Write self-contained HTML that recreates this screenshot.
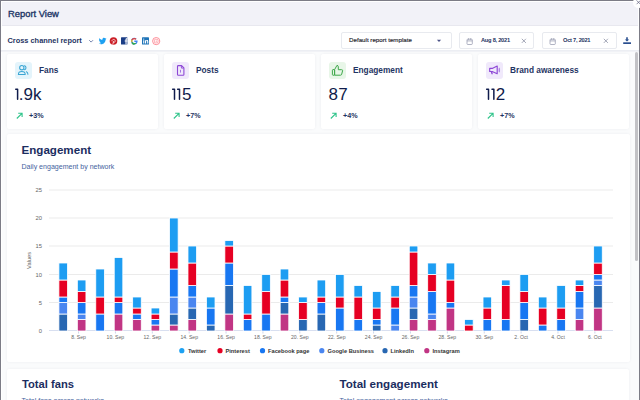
<!DOCTYPE html>
<html><head><meta charset="utf-8">
<style>
*{box-sizing:border-box;margin:0;padding:0}
html,body{width:640px;height:400px;overflow:hidden}
body{font-family:"Liberation Sans",sans-serif;background:#7c7c86;position:relative;color:#1b2d5b}
.modal{position:absolute;left:1px;top:1px;width:638px;height:420px;background:#fff;overflow:hidden}
.hdr{position:absolute;left:1px;top:1px;width:636px;height:24px;background:#f2f2f8;border-bottom:1px solid #e8e8ef;box-shadow:0 1px 0 #f3f3f7}
.t{position:absolute;white-space:nowrap;line-height:1}
.tb{position:absolute;left:0;top:25px;width:638px;height:25px;background:#fff;border-bottom:1px solid #eceef3;box-shadow:0 1px 0 #f1f2f6}
.card{position:absolute;background:#fff;border-radius:2px;box-shadow:0 0 3px rgba(30,40,90,0.06)}
.ib{position:absolute;width:17px;height:17px;border-radius:3px}
.lab{font-size:8.3px;font-weight:bold;color:#1f3563}
.val{font-size:17px;color:#101c4c}
.pct{font-size:7.2px;font-weight:bold;color:#1f3563}
.sel{position:absolute;background:#fff;border:1px solid #e8eaef;border-radius:2px}
.yl{font-size:5.8px;fill:#666}
.xl{font-size:5.1px;fill:#666}
.lg{font-size:5.7px;font-weight:bold;fill:#333}
</style></head><body>
<div class="modal">
  <div class="hdr"></div><div style="position:absolute;left:1px;top:50px;width:637px;height:380px;background:#fafbfc"></div>
  <div class="t" style="left:7px;top:8.3px;font-size:9.4px;-webkit-text-stroke:0.35px #203566;color:#203566">Report View</div>
  <div class="tb"></div>
  <div class="t" style="left:6.5px;top:36.2px;font-size:7.4px;font-weight:bold;color:#1f3563">Cross channel report</div>
  <!-- chevron -->
  <svg class="t" style="left:87px;top:38px" width="8" height="5" viewBox="0 0 8 5"><path d="M1.2 1.2L3.1 3.1L5 1.2" fill="none" stroke="#5f70a0" stroke-width="0.85"/></svg>
  <!-- social icons -->
  <svg class="t" style="left:96px;top:34.6px" width="66" height="10" viewBox="0 0 66 10">
    <!-- twitter -->
    <path d="M9.3 2.6c-.3.1-.6.2-.9.2.3-.2.6-.5.7-.9-.3.2-.6.3-1 .4-.3-.3-.7-.5-1.1-.5-.9 0-1.6.7-1.6 1.6 0 .1 0 .2 0 .4C4.1 3.7 3 3.1 2.2 2.2c-.1.2-.2.5-.2.8 0 .6.3 1 .7 1.3-.3 0-.5-.1-.7-.2 0 .8.5 1.4 1.3 1.6-.1 0-.3.1-.4.1-.1 0-.2 0-.3 0 .2.6.8 1.1 1.5 1.1-.6.4-1.2.7-2 .7h-.4c.7.4 1.5.7 2.4.7 2.9 0 4.5-2.4 4.5-4.5v-.2c.3-.3.6-.6.7-.9z" fill="#1da1f2"/>
    <!-- pinterest -->
    <circle cx="16.5" cy="5" r="3.8" fill="#cb1f27"/>
    <path d="M15.8 8.5l.8-3.4M16.2 6.2c.3.4 1.9.4 2-1.1.1-1.3-1-1.8-1.9-1.6-1 .2-1.5 1.1-1.2 1.8" fill="none" stroke="#fff" stroke-width="0.7"/>
    <!-- facebook -->
    <rect x="24" y="1.3" width="6.4" height="7.2" rx="0.5" fill="#1b3e86"/>
    <path d="M29.6 8.5V5.6h1V4.5h-1v-.8c0-.3.1-.5.5-.5h.5v-1h-.8c-.9 0-1.3.5-1.3 1.3v1h-.8v1.1h.8v2.9" fill="#fff"/>
    
    <!-- google -->
    <path d="M40.6 4.6h-3.3v1.3h1.9c-.2.8-.9 1.3-1.9 1.3-1.1 0-2-.9-2-2.1s.9-2.1 2-2.1c.5 0 1 .2 1.3.5l1-.9c-.6-.5-1.4-.9-2.3-.9-1.9 0-3.4 1.5-3.4 3.4s1.5 3.4 3.4 3.4c1.9 0 3.3-1.3 3.3-3.3 0-.2 0-.4 0-.6z" fill="#4285f4"/>
    <path d="M34.5 3.4l1.1.9c.3-.6.9-1 1.6-1 .5 0 1 .2 1.3.5l1-.9c-.6-.5-1.4-.9-2.3-.9-1.3 0-2.5.8-3 1.9z" fill="#ea4335"/>
    <path d="M34.2 5c0 .5.1 1 .3 1.5l1.1-.9c-.1-.2-.1-.4-.1-.6s0-.4.1-.6l-1.1-.9c-.2.5-.3 1-.3 1.5z" fill="#fbbc05"/>
    <path d="M37.2 8.4c.9 0 1.7-.3 2.3-.8l-1.1-.9c-.3.2-.7.4-1.2.4-.7 0-1.3-.4-1.6-1l-1.1.9c.5 1.2 1.6 1.9 2.9 1.9z" fill="#34a853"/>
    <!-- linkedin -->
    <rect x="45" y="1.3" width="7" height="7.2" rx="0.6" fill="#1f74b8"/>
    <path d="M46.2 4.2h1.1v3.3h-1.1zM46.75 2.5a.6.6 0 1 1 0 1.2.6.6 0 1 1 0-1.2zM48 4.2h1v.5c.2-.3.5-.6 1.1-.6 1 0 1.2.7 1.2 1.5v1.9h-1.1V5.8c0-.4 0-.8-.5-.8s-.6.4-.6.8v1.7H48z" fill="#fff"/>
    <!-- instagram -->
    <circle cx="59.2" cy="5.1" r="3.6" fill="none" stroke="#fd7480" stroke-width="0.8"/>
    <rect x="57.4" y="3.3" width="3.6" height="3.6" rx="1" fill="none" stroke="#fd7480" stroke-width="0.6"/>
    <circle cx="59.2" cy="5.1" r="0.6" fill="#fd7480"/>
  </svg>

  <!-- dropdown -->
  <div class="sel" style="left:340px;top:31px;width:111px;height:17px"></div>
  <div class="t" style="left:348px;top:36.3px;font-size:6.2px;color:#26262e;-webkit-text-stroke:0.15px #26262e">Default report template</div>
  <svg class="t" style="left:435.4px;top:37.6px" width="6" height="4"><path d="M0.9 0.8H5.1L3 3.1z" fill="#4d5488"/></svg>

  <div class="sel" style="left:458px;top:31px;width:75px;height:17px"></div>
  <svg class="t" style="left:465px;top:35.5px" width="8" height="9" viewBox="0 0 8 9"><rect x="1" y="2.2" width="5.3" height="5.3" rx="0.8" fill="none" stroke="#8f93aa" stroke-width="0.7"/><path d="M1 3.9H6.3M2.6 1.2V2.8M4.7 1.2V2.8" stroke="#8f93aa" stroke-width="0.7"/></svg>
  <div class="t" style="left:480px;top:37.2px;font-size:5.7px;letter-spacing:-0.25px;font-weight:bold;color:#1f3563">Aug 8, 2021</div>
  <svg class="t" style="left:519.5px;top:36.7px" width="6" height="6" viewBox="0 0 6 6"><path d="M0.8 0.8L4.9 4.9M4.9 0.8L0.8 4.9" stroke="#7d8299" stroke-width="0.7"/></svg>

  <div class="sel" style="left:540.5px;top:31px;width:75px;height:17px"></div>
  <svg class="t" style="left:547.5px;top:35.5px" width="8" height="9" viewBox="0 0 8 9"><rect x="1" y="2.2" width="5.3" height="5.3" rx="0.8" fill="none" stroke="#8f93aa" stroke-width="0.7"/><path d="M1 3.9H6.3M2.6 1.2V2.8M4.7 1.2V2.8" stroke="#8f93aa" stroke-width="0.7"/></svg>
  <div class="t" style="left:562px;top:37.2px;font-size:5.7px;letter-spacing:-0.25px;font-weight:bold;color:#1f3563">Oct 7, 2021</div>
  <svg class="t" style="left:601.5px;top:36.7px" width="6" height="6" viewBox="0 0 6 6"><path d="M0.8 0.8L4.9 4.9M4.9 0.8L0.8 4.9" stroke="#7d8299" stroke-width="0.7"/></svg>
  <!-- download -->
  <svg class="t" style="left:622px;top:35px" width="10" height="10" viewBox="624 36 10 10"><path d="M627.2 37.3h1.6v2.1h1.4L628 41.6l-2.2-2.2h1.4z" fill="#2a4f8f"/><rect x="624.2" y="42.3" width="7.8" height="1.7" fill="#2a4f8f"/></svg>

  <!-- metric cards -->
  <div class="card" style="left:6px;top:53px;width:151px;height:74.5px"></div>
  <div class="card" style="left:163px;top:53px;width:151px;height:74.5px"></div>
  <div class="card" style="left:320px;top:53px;width:151px;height:74.5px"></div>
  <div class="card" style="left:477px;top:53px;width:151px;height:74.5px"></div>

  <!-- chart card -->
  <div class="card" style="left:6px;top:133px;width:622.5px;height:228px"></div>
  <!-- bottom card -->
  <div class="card" style="left:6px;top:368px;width:622px;height:60px"></div>

  <div class="t" style="left:20.5px;top:142.5px;font-size:11.6px;font-weight:bold;color:#1b2d5f">Engagement</div>
  <div class="t" style="left:20.5px;top:162px;font-size:7.05px;color:#44629e">Daily engagement by network</div>
  <div class="t" style="left:21px;top:378.2px;font-size:11.2px;font-weight:bold;color:#1b2d5f">Total fans</div>
  <div class="t" style="left:20.5px;top:395.5px;font-size:7px;color:#44629e">Total fans across networks</div>
  <div class="t" style="left:338.5px;top:376.8px;font-size:11.6px;font-weight:bold;color:#1b2d5f">Total engagement</div>
  <div class="t" style="left:338.5px;top:395.5px;font-size:7px;color:#44629e">Total engagement across networks</div>
</div>

<!-- metric contents (absolute in page coords) -->
<div class="ib" style="left:14.8px;top:61.7px;width:16.8px;height:17.3px;background:#e4f4fb"></div>
<div class="ib" style="left:172px;top:62px;width:16.8px;height:16.8px;background:#f0e9fb"></div>
<div class="ib" style="left:328.8px;top:62px;width:17.2px;height:16.8px;background:#e8f6e8"></div>
<div class="ib" style="left:486px;top:62px;width:17.2px;height:16.5px;background:#f0e9fb"></div>
<svg class="t" style="left:0;top:0" width="640" height="90" viewBox="0 0 640 90">
  <circle cx="21.8" cy="67.7" r="2.15" fill="none" stroke="#3aa6d4" stroke-width="1.05"/>
  <path d="M18.4 74.4Q18.4 71.5 21.8 71.5Q25.2 71.5 25.2 74.4Z" fill="none" stroke="#3aa6d4" stroke-width="1.05" stroke-linejoin="round"/>
  <path d="M24.4 65.7a2.05 2.05 0 0 1 0 4M26.4 71.7Q27.9 72.4 27.9 74.3" fill="none" stroke="#3aa6d4" stroke-width="1.05" stroke-linecap="round"/>
  <path d="M178.3 65.6h3.3l2.3 2.3v6.5q0 .8-.8 .8h-4.8q-.8 0-.8-.8v-8q0-.8 .8-.8z" fill="none" stroke="#8d47d6" stroke-width="1.1" stroke-linejoin="round"/>
  <path d="M181.4 65.8v2.3h2.3" fill="none" stroke="#8d47d6" stroke-width="0.9"/>
  <path d="M180.5 69.8v2.8" stroke="#a675e0" stroke-width="1"/>
  <rect x="332.4" y="69.6" width="2.2" height="5.6" rx="0.6" fill="none" stroke="#3ea84a" stroke-width="1"/>
  <path d="M334.6 75.2h5.9q1 0 1.2-1l.9-3.5q.2-1-1-1h-3.3v-2.8q0-1.4-1.3-1.6l-2.4 4.3z" fill="none" stroke="#3ea84a" stroke-width="1" stroke-linejoin="round"/>
  <path d="M489.7 68.4h2.5l5-2.3v7.7l-5-2.3h-2.5z" fill="none" stroke="#8d47d6" stroke-width="1.15" stroke-linejoin="round"/>
  <path d="M490.8 71.8l.7 2.4h1.3l-.5-2.4z" fill="#8d47d6"/>
  <ellipse cx="499.3" cy="70" rx="0.75" ry="2.5" fill="#b084e4"/>
</svg>
<div class="t lab" style="left:39px;top:66px">Fans</div>
<div class="t lab" style="left:196px;top:66px">Posts</div>
<div class="t lab" style="left:353px;top:66px">Engagement</div>
<div class="t lab" style="left:510px;top:66px">Brand awareness</div>

<div class="t val" style="left:18.7px;top:85.85px">.</div>
<div class="t val" style="left:23.6px;top:85.85px">9</div>
<div class="t val" style="left:32.9px;top:85.85px">k</div>
<div class="t val" style="left:182.1px;top:85.85px">5</div>
<div class="t val" style="left:328.5px;top:85.85px">8</div>
<div class="t val" style="left:338.3px;top:85.85px">7</div>
<div class="t val" style="left:495.7px;top:85.85px">2</div>
<svg class="t" style="left:0;top:0" width="640" height="110"><path d="M15.75 89.35H17.60V99.25" fill="none" stroke="#101c4c" stroke-width="1.5" stroke-linecap="round" stroke-linejoin="round"/><path d="M172.65 89.35H174.50V99.25" fill="none" stroke="#101c4c" stroke-width="1.5" stroke-linecap="round" stroke-linejoin="round"/><path d="M177.65 89.35H179.50V99.25" fill="none" stroke="#101c4c" stroke-width="1.5" stroke-linecap="round" stroke-linejoin="round"/><path d="M486.65 89.35H488.50V99.25" fill="none" stroke="#101c4c" stroke-width="1.5" stroke-linecap="round" stroke-linejoin="round"/><path d="M492.00 89.35H493.85V99.25" fill="none" stroke="#101c4c" stroke-width="1.5" stroke-linecap="round" stroke-linejoin="round"/></svg>

<svg class="t" style="left:15px;top:111px" width="9" height="9" viewBox="0 0 9 9"><path d="M1.8 7.5L7 2.3M3.2 2.2H7.1V6.1" fill="none" stroke="#2fc48a" stroke-width="1.1"/></svg>
<svg class="t" style="left:172px;top:111px" width="9" height="9" viewBox="0 0 9 9"><path d="M1.8 7.5L7 2.3M3.2 2.2H7.1V6.1" fill="none" stroke="#2fc48a" stroke-width="1.1"/></svg>
<svg class="t" style="left:329px;top:111px" width="9" height="9" viewBox="0 0 9 9"><path d="M1.8 7.5L7 2.3M3.2 2.2H7.1V6.1" fill="none" stroke="#2fc48a" stroke-width="1.1"/></svg>
<svg class="t" style="left:486px;top:111px" width="9" height="9" viewBox="0 0 9 9"><path d="M1.8 7.5L7 2.3M3.2 2.2H7.1V6.1" fill="none" stroke="#2fc48a" stroke-width="1.1"/></svg>

<div class="t pct" style="left:29px;top:111.5px">+3%</div>
<div class="t pct" style="left:186px;top:111.5px">+7%</div>
<div class="t pct" style="left:343px;top:111.5px">+4%</div>
<div class="t pct" style="left:500px;top:111.5px">+7%</div>

<svg width="640" height="400" style="position:absolute;left:0;top:0">
<path d="M49 330.5H613" stroke="#d8dff0" stroke-width="1"/>
<text x="42" y="332.9" text-anchor="end" class="yl">0</text>
<path d="M49 302.5H613" stroke="#ebebeb" stroke-width="1"/>
<text x="42" y="304.8" text-anchor="end" class="yl">5</text>
<path d="M49 274.5H613" stroke="#ebebeb" stroke-width="1"/>
<text x="42" y="276.6" text-anchor="end" class="yl">10</text>
<path d="M49 246.0H613" stroke="#ebebeb" stroke-width="1"/>
<text x="42" y="248.4" text-anchor="end" class="yl">15</text>
<path d="M49 218.0H613" stroke="#ebebeb" stroke-width="1"/>
<text x="42" y="220.3" text-anchor="end" class="yl">20</text>
<path d="M49 190.0H613" stroke="#ebebeb" stroke-width="1"/>
<text x="42" y="192.1" text-anchor="end" class="yl">25</text>
<path d="M78.54 331V333.5" stroke="#ccd6eb" stroke-width="1"/>
<path d="M115.42 331V333.5" stroke="#ccd6eb" stroke-width="1"/>
<path d="M152.30 331V333.5" stroke="#ccd6eb" stroke-width="1"/>
<path d="M189.18 331V333.5" stroke="#ccd6eb" stroke-width="1"/>
<path d="M226.06 331V333.5" stroke="#ccd6eb" stroke-width="1"/>
<path d="M262.94 331V333.5" stroke="#ccd6eb" stroke-width="1"/>
<path d="M299.82 331V333.5" stroke="#ccd6eb" stroke-width="1"/>
<path d="M336.70 331V333.5" stroke="#ccd6eb" stroke-width="1"/>
<path d="M373.58 331V333.5" stroke="#ccd6eb" stroke-width="1"/>
<path d="M410.46 331V333.5" stroke="#ccd6eb" stroke-width="1"/>
<path d="M447.34 331V333.5" stroke="#ccd6eb" stroke-width="1"/>
<path d="M484.22 331V333.5" stroke="#ccd6eb" stroke-width="1"/>
<path d="M521.10 331V333.5" stroke="#ccd6eb" stroke-width="1"/>
<path d="M557.98 331V333.5" stroke="#ccd6eb" stroke-width="1"/>
<path d="M594.86 331V333.5" stroke="#ccd6eb" stroke-width="1"/>
<text x="78.5" y="339" text-anchor="middle" class="xl">8. Sep</text>
<text x="115.4" y="339" text-anchor="middle" class="xl">10. Sep</text>
<text x="152.3" y="339" text-anchor="middle" class="xl">12. Sep</text>
<text x="189.2" y="339" text-anchor="middle" class="xl">14. Sep</text>
<text x="226.1" y="339" text-anchor="middle" class="xl">16. Sep</text>
<text x="262.9" y="339" text-anchor="middle" class="xl">18. Sep</text>
<text x="299.8" y="339" text-anchor="middle" class="xl">20. Sep</text>
<text x="336.7" y="339" text-anchor="middle" class="xl">22. Sep</text>
<text x="373.6" y="339" text-anchor="middle" class="xl">24. Sep</text>
<text x="410.5" y="339" text-anchor="middle" class="xl">26. Sep</text>
<text x="447.3" y="339" text-anchor="middle" class="xl">28. Sep</text>
<text x="484.2" y="339" text-anchor="middle" class="xl">30. Sep</text>
<text x="521.1" y="339" text-anchor="middle" class="xl">2. Oct</text>
<text x="558.0" y="339" text-anchor="middle" class="xl">4. Oct</text>
<text x="594.9" y="339" text-anchor="middle" class="xl">6. Oct</text>
<rect x="58.9" y="314.0" width="8.6" height="17.0" fill="#2867b2" stroke="#fff" stroke-width="0.8"/>
<rect x="58.9" y="302.5" width="8.6" height="11.5" fill="#4a86f0" stroke="#fff" stroke-width="0.8"/>
<rect x="58.9" y="297.0" width="8.6" height="5.5" fill="#1877f2" stroke="#fff" stroke-width="0.8"/>
<rect x="58.9" y="280.0" width="8.6" height="17.0" fill="#e60023" stroke="#fff" stroke-width="0.8"/>
<rect x="58.9" y="263.0" width="8.6" height="17.0" fill="#1d9df2" stroke="#fff" stroke-width="0.8"/>
<rect x="77.34" y="319.5" width="8.6" height="11.5" fill="#c13584" stroke="#fff" stroke-width="0.8"/>
<rect x="77.34" y="314.0" width="8.6" height="5.5" fill="#4a86f0" stroke="#fff" stroke-width="0.8"/>
<rect x="77.34" y="302.5" width="8.6" height="11.5" fill="#1877f2" stroke="#fff" stroke-width="0.8"/>
<rect x="77.34" y="291.5" width="8.6" height="11.0" fill="#e60023" stroke="#fff" stroke-width="0.8"/>
<rect x="77.34" y="280.0" width="8.6" height="11.5" fill="#1d9df2" stroke="#fff" stroke-width="0.8"/>
<rect x="95.78" y="314.0" width="8.6" height="17.0" fill="#1877f2" stroke="#fff" stroke-width="0.8"/>
<rect x="95.78" y="297.0" width="8.6" height="17.0" fill="#e60023" stroke="#fff" stroke-width="0.8"/>
<rect x="95.78" y="269.0" width="8.6" height="28.0" fill="#1d9df2" stroke="#fff" stroke-width="0.8"/>
<rect x="114.22" y="314.0" width="8.6" height="17.0" fill="#c13584" stroke="#fff" stroke-width="0.8"/>
<rect x="114.22" y="302.5" width="8.6" height="11.5" fill="#1877f2" stroke="#fff" stroke-width="0.8"/>
<rect x="114.22" y="297.0" width="8.6" height="5.5" fill="#e60023" stroke="#fff" stroke-width="0.8"/>
<rect x="114.22" y="257.5" width="8.6" height="39.5" fill="#1d9df2" stroke="#fff" stroke-width="0.8"/>
<rect x="132.66" y="319.5" width="8.6" height="11.5" fill="#c13584" stroke="#fff" stroke-width="0.8"/>
<rect x="132.66" y="314.0" width="8.6" height="5.5" fill="#1877f2" stroke="#fff" stroke-width="0.8"/>
<rect x="132.66" y="308.0" width="8.6" height="6.0" fill="#e60023" stroke="#fff" stroke-width="0.8"/>
<rect x="132.66" y="297.0" width="8.6" height="11.0" fill="#1d9df2" stroke="#fff" stroke-width="0.8"/>
<rect x="151.1" y="325.0" width="8.6" height="6.0" fill="#c13584" stroke="#fff" stroke-width="0.8"/>
<rect x="151.1" y="319.5" width="8.6" height="5.5" fill="#1877f2" stroke="#fff" stroke-width="0.8"/>
<rect x="151.1" y="314.0" width="8.6" height="5.5" fill="#e60023" stroke="#fff" stroke-width="0.8"/>
<rect x="151.1" y="308.0" width="8.6" height="6.0" fill="#1d9df2" stroke="#fff" stroke-width="0.8"/>
<rect x="169.54" y="325.0" width="8.6" height="6.0" fill="#c13584" stroke="#fff" stroke-width="0.8"/>
<rect x="169.54" y="314.0" width="8.6" height="11.0" fill="#2867b2" stroke="#fff" stroke-width="0.8"/>
<rect x="169.54" y="297.0" width="8.6" height="17.0" fill="#4a86f0" stroke="#fff" stroke-width="0.8"/>
<rect x="169.54" y="269.0" width="8.6" height="28.0" fill="#1877f2" stroke="#fff" stroke-width="0.8"/>
<rect x="169.54" y="252.0" width="8.6" height="17.0" fill="#e60023" stroke="#fff" stroke-width="0.8"/>
<rect x="169.54" y="218.0" width="8.6" height="34.0" fill="#1d9df2" stroke="#fff" stroke-width="0.8"/>
<rect x="187.98" y="319.5" width="8.6" height="11.5" fill="#c13584" stroke="#fff" stroke-width="0.8"/>
<rect x="187.98" y="308.0" width="8.6" height="11.5" fill="#2867b2" stroke="#fff" stroke-width="0.8"/>
<rect x="187.98" y="297.0" width="8.6" height="11.0" fill="#4a86f0" stroke="#fff" stroke-width="0.8"/>
<rect x="187.98" y="285.5" width="8.6" height="11.5" fill="#1877f2" stroke="#fff" stroke-width="0.8"/>
<rect x="187.98" y="263.0" width="8.6" height="22.5" fill="#e60023" stroke="#fff" stroke-width="0.8"/>
<rect x="187.98" y="246.0" width="8.6" height="17.0" fill="#1d9df2" stroke="#fff" stroke-width="0.8"/>
<rect x="206.42" y="325.0" width="8.6" height="6.0" fill="#2867b2" stroke="#fff" stroke-width="0.8"/>
<rect x="206.42" y="308.0" width="8.6" height="17.0" fill="#1877f2" stroke="#fff" stroke-width="0.8"/>
<rect x="206.42" y="297.0" width="8.6" height="11.0" fill="#1d9df2" stroke="#fff" stroke-width="0.8"/>
<rect x="224.86" y="314.0" width="8.6" height="17.0" fill="#c13584" stroke="#fff" stroke-width="0.8"/>
<rect x="224.86" y="285.5" width="8.6" height="28.5" fill="#2867b2" stroke="#fff" stroke-width="0.8"/>
<rect x="224.86" y="263.0" width="8.6" height="22.5" fill="#1877f2" stroke="#fff" stroke-width="0.8"/>
<rect x="224.86" y="246.0" width="8.6" height="17.0" fill="#e60023" stroke="#fff" stroke-width="0.8"/>
<rect x="224.86" y="240.5" width="8.6" height="5.5" fill="#1d9df2" stroke="#fff" stroke-width="0.8"/>
<rect x="243.3" y="319.5" width="8.6" height="11.5" fill="#1877f2" stroke="#fff" stroke-width="0.8"/>
<rect x="243.3" y="314.0" width="8.6" height="5.5" fill="#e60023" stroke="#fff" stroke-width="0.8"/>
<rect x="243.3" y="285.5" width="8.6" height="28.5" fill="#1d9df2" stroke="#fff" stroke-width="0.8"/>
<rect x="261.74" y="314.0" width="8.6" height="17.0" fill="#1877f2" stroke="#fff" stroke-width="0.8"/>
<rect x="261.74" y="291.5" width="8.6" height="22.5" fill="#e60023" stroke="#fff" stroke-width="0.8"/>
<rect x="261.74" y="274.5" width="8.6" height="17.0" fill="#1d9df2" stroke="#fff" stroke-width="0.8"/>
<rect x="280.18" y="314.0" width="8.6" height="17.0" fill="#c13584" stroke="#fff" stroke-width="0.8"/>
<rect x="280.18" y="302.5" width="8.6" height="11.5" fill="#2867b2" stroke="#fff" stroke-width="0.8"/>
<rect x="280.18" y="297.0" width="8.6" height="5.5" fill="#1877f2" stroke="#fff" stroke-width="0.8"/>
<rect x="280.18" y="280.0" width="8.6" height="17.0" fill="#e60023" stroke="#fff" stroke-width="0.8"/>
<rect x="280.18" y="269.0" width="8.6" height="11.0" fill="#1d9df2" stroke="#fff" stroke-width="0.8"/>
<rect x="298.62" y="319.5" width="8.6" height="11.5" fill="#2867b2" stroke="#fff" stroke-width="0.8"/>
<rect x="298.62" y="302.5" width="8.6" height="17.0" fill="#e60023" stroke="#fff" stroke-width="0.8"/>
<rect x="298.62" y="297.0" width="8.6" height="5.5" fill="#1d9df2" stroke="#fff" stroke-width="0.8"/>
<rect x="317.06" y="314.0" width="8.6" height="17.0" fill="#2867b2" stroke="#fff" stroke-width="0.8"/>
<rect x="317.06" y="302.5" width="8.6" height="11.5" fill="#1877f2" stroke="#fff" stroke-width="0.8"/>
<rect x="317.06" y="297.0" width="8.6" height="5.5" fill="#e60023" stroke="#fff" stroke-width="0.8"/>
<rect x="317.06" y="280.0" width="8.6" height="17.0" fill="#1d9df2" stroke="#fff" stroke-width="0.8"/>
<rect x="335.5" y="308.0" width="8.6" height="23.0" fill="#1877f2" stroke="#fff" stroke-width="0.8"/>
<rect x="335.5" y="297.0" width="8.6" height="11.0" fill="#e60023" stroke="#fff" stroke-width="0.8"/>
<rect x="335.5" y="274.5" width="8.6" height="22.5" fill="#1d9df2" stroke="#fff" stroke-width="0.8"/>
<rect x="353.94" y="319.5" width="8.6" height="11.5" fill="#1877f2" stroke="#fff" stroke-width="0.8"/>
<rect x="353.94" y="297.0" width="8.6" height="22.5" fill="#e60023" stroke="#fff" stroke-width="0.8"/>
<rect x="353.94" y="285.5" width="8.6" height="11.5" fill="#1d9df2" stroke="#fff" stroke-width="0.8"/>
<rect x="372.38" y="325.0" width="8.6" height="6.0" fill="#2867b2" stroke="#fff" stroke-width="0.8"/>
<rect x="372.38" y="319.5" width="8.6" height="5.5" fill="#1877f2" stroke="#fff" stroke-width="0.8"/>
<rect x="372.38" y="308.0" width="8.6" height="11.5" fill="#e60023" stroke="#fff" stroke-width="0.8"/>
<rect x="372.38" y="291.5" width="8.6" height="16.5" fill="#1d9df2" stroke="#fff" stroke-width="0.8"/>
<rect x="390.82" y="325.0" width="8.6" height="6.0" fill="#4a86f0" stroke="#fff" stroke-width="0.8"/>
<rect x="390.82" y="308.0" width="8.6" height="17.0" fill="#1877f2" stroke="#fff" stroke-width="0.8"/>
<rect x="390.82" y="297.0" width="8.6" height="11.0" fill="#e60023" stroke="#fff" stroke-width="0.8"/>
<rect x="390.82" y="285.5" width="8.6" height="11.5" fill="#1d9df2" stroke="#fff" stroke-width="0.8"/>
<rect x="409.26" y="319.5" width="8.6" height="11.5" fill="#c13584" stroke="#fff" stroke-width="0.8"/>
<rect x="409.26" y="308.0" width="8.6" height="11.5" fill="#2867b2" stroke="#fff" stroke-width="0.8"/>
<rect x="409.26" y="297.0" width="8.6" height="11.0" fill="#4a86f0" stroke="#fff" stroke-width="0.8"/>
<rect x="409.26" y="285.5" width="8.6" height="11.5" fill="#1877f2" stroke="#fff" stroke-width="0.8"/>
<rect x="409.26" y="252.0" width="8.6" height="33.5" fill="#e60023" stroke="#fff" stroke-width="0.8"/>
<rect x="409.26" y="246.0" width="8.6" height="6.0" fill="#1d9df2" stroke="#fff" stroke-width="0.8"/>
<rect x="427.7" y="319.5" width="8.6" height="11.5" fill="#c13584" stroke="#fff" stroke-width="0.8"/>
<rect x="427.7" y="314.0" width="8.6" height="5.5" fill="#4a86f0" stroke="#fff" stroke-width="0.8"/>
<rect x="427.7" y="291.5" width="8.6" height="22.5" fill="#1877f2" stroke="#fff" stroke-width="0.8"/>
<rect x="427.7" y="274.5" width="8.6" height="17.0" fill="#e60023" stroke="#fff" stroke-width="0.8"/>
<rect x="427.7" y="263.0" width="8.6" height="11.5" fill="#1d9df2" stroke="#fff" stroke-width="0.8"/>
<rect x="446.14" y="308.0" width="8.6" height="23.0" fill="#c13584" stroke="#fff" stroke-width="0.8"/>
<rect x="446.14" y="302.5" width="8.6" height="5.5" fill="#1877f2" stroke="#fff" stroke-width="0.8"/>
<rect x="446.14" y="280.0" width="8.6" height="22.5" fill="#e60023" stroke="#fff" stroke-width="0.8"/>
<rect x="446.14" y="263.0" width="8.6" height="17.0" fill="#1d9df2" stroke="#fff" stroke-width="0.8"/>
<rect x="464.58" y="325.0" width="8.6" height="6.0" fill="#e60023" stroke="#fff" stroke-width="0.8"/>
<rect x="464.58" y="319.5" width="8.6" height="5.5" fill="#1d9df2" stroke="#fff" stroke-width="0.8"/>
<rect x="483.02" y="319.5" width="8.6" height="11.5" fill="#1877f2" stroke="#fff" stroke-width="0.8"/>
<rect x="483.02" y="308.0" width="8.6" height="11.5" fill="#e60023" stroke="#fff" stroke-width="0.8"/>
<rect x="483.02" y="297.0" width="8.6" height="11.0" fill="#1d9df2" stroke="#fff" stroke-width="0.8"/>
<rect x="501.46" y="319.5" width="8.6" height="11.5" fill="#1877f2" stroke="#fff" stroke-width="0.8"/>
<rect x="501.46" y="285.5" width="8.6" height="34.0" fill="#e60023" stroke="#fff" stroke-width="0.8"/>
<rect x="501.46" y="280.0" width="8.6" height="5.5" fill="#1d9df2" stroke="#fff" stroke-width="0.8"/>
<rect x="519.9" y="319.5" width="8.6" height="11.5" fill="#2867b2" stroke="#fff" stroke-width="0.8"/>
<rect x="519.9" y="302.5" width="8.6" height="17.0" fill="#1877f2" stroke="#fff" stroke-width="0.8"/>
<rect x="519.9" y="291.5" width="8.6" height="11.0" fill="#e60023" stroke="#fff" stroke-width="0.8"/>
<rect x="519.9" y="274.5" width="8.6" height="17.0" fill="#1d9df2" stroke="#fff" stroke-width="0.8"/>
<rect x="538.34" y="325.0" width="8.6" height="6.0" fill="#1877f2" stroke="#fff" stroke-width="0.8"/>
<rect x="538.34" y="308.0" width="8.6" height="17.0" fill="#e60023" stroke="#fff" stroke-width="0.8"/>
<rect x="538.34" y="297.0" width="8.6" height="11.0" fill="#1d9df2" stroke="#fff" stroke-width="0.8"/>
<rect x="556.78" y="319.5" width="8.6" height="11.5" fill="#1877f2" stroke="#fff" stroke-width="0.8"/>
<rect x="556.78" y="308.0" width="8.6" height="11.5" fill="#e60023" stroke="#fff" stroke-width="0.8"/>
<rect x="556.78" y="285.5" width="8.6" height="22.5" fill="#1d9df2" stroke="#fff" stroke-width="0.8"/>
<rect x="575.22" y="319.5" width="8.6" height="11.5" fill="#c13584" stroke="#fff" stroke-width="0.8"/>
<rect x="575.22" y="308.0" width="8.6" height="11.5" fill="#4a86f0" stroke="#fff" stroke-width="0.8"/>
<rect x="575.22" y="291.5" width="8.6" height="16.5" fill="#1877f2" stroke="#fff" stroke-width="0.8"/>
<rect x="575.22" y="285.5" width="8.6" height="6.0" fill="#e60023" stroke="#fff" stroke-width="0.8"/>
<rect x="575.22" y="280.0" width="8.6" height="5.5" fill="#1d9df2" stroke="#fff" stroke-width="0.8"/>
<rect x="593.66" y="308.0" width="8.6" height="23.0" fill="#c13584" stroke="#fff" stroke-width="0.8"/>
<rect x="593.66" y="285.5" width="8.6" height="22.5" fill="#2867b2" stroke="#fff" stroke-width="0.8"/>
<rect x="593.66" y="280.0" width="8.6" height="5.5" fill="#4a86f0" stroke="#fff" stroke-width="0.8"/>
<rect x="593.66" y="274.5" width="8.6" height="5.5" fill="#1877f2" stroke="#fff" stroke-width="0.8"/>
<rect x="593.66" y="263.0" width="8.6" height="11.5" fill="#e60023" stroke="#fff" stroke-width="0.8"/>
<rect x="593.66" y="246.0" width="8.6" height="17.0" fill="#1d9df2" stroke="#fff" stroke-width="0.8"/>

<g class="lg">
<circle cx="181.8" cy="350.7" r="2.6" fill="#1da1f2"/><text x="188" y="352.8">Twitter</text>
<circle cx="220" cy="350.7" r="2.6" fill="#e60023"/><text x="225.5" y="352.8">Pinterest</text>
<circle cx="262.5" cy="350.7" r="2.6" fill="#1877f2"/><text x="268" y="352.8">Facebook page</text>
<circle cx="321.8" cy="350.7" r="2.6" fill="#4a86f0"/><text x="327.5" y="352.8">Google Business</text>
<circle cx="385" cy="350.7" r="2.6" fill="#2867b2"/><text x="390.5" y="352.8">LinkedIn</text>
<circle cx="426.8" cy="350.7" r="2.6" fill="#c13584"/><text x="432.5" y="352.8">Instagram</text>
</g>
<text transform="translate(31,260.4) rotate(-90)" text-anchor="middle" style="font-size:5.7px;fill:#666">Values</text>
</svg>

<!-- scrollbar -->
<div style="position:absolute;left:635px;top:52px;width:3px;height:209px;border-radius:1.5px;background:#c2c2c6"></div>
<!-- close button -->
<div style="position:absolute;left:632.8px;top:-3.2px;width:11.5px;height:11.5px;border-radius:50%;background:#fff"></div>
<svg style="position:absolute;left:634px;top:-2px" width="8" height="8" viewBox="0 0 8 8"><path d="M2.6 2.4L6.4 6.2M6.4 2.4L2.6 6.2" stroke="#5a5a78" stroke-width="0.7"/></svg>
</body></html>
